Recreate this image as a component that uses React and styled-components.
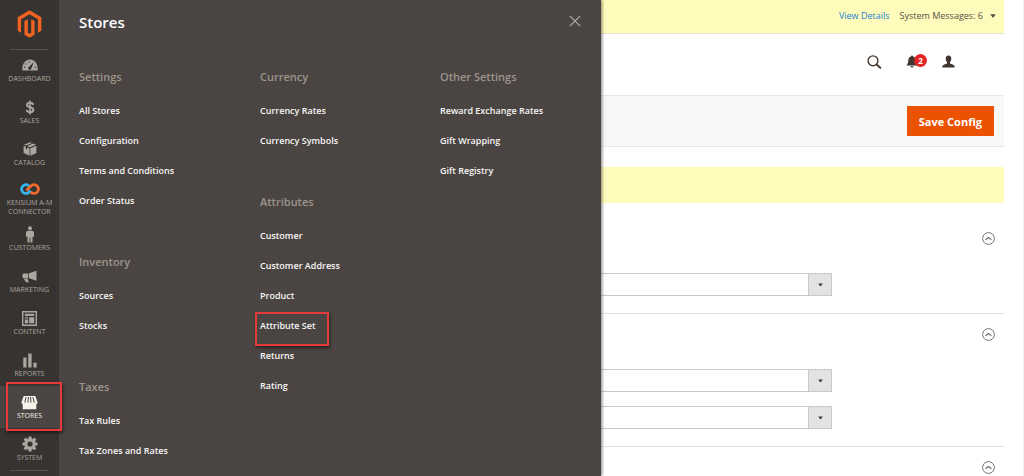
import React from "react";
import styled, { createGlobalStyle, css } from "styled-components";

const GlobalStyle = createGlobalStyle`
* { box-sizing: border-box; }
body {
  margin: 0;
  background: #ffffff;
  font-family: "Open Sans", "Noto Sans", sans-serif;
  overflow: hidden;
}
ul { list-style: none; margin: 0; padding: 0; }
h1, h2 { margin: 0; }
a { text-decoration: none; }
button { font-family: inherit; cursor: pointer; }
`;

const Page = styled.div`
display: flex;
height: 100vh;
overflow: hidden;
`;

/* ---- sidebar ---- */

const Sidebar = styled.nav`
position: relative;
z-index: 3;
flex: 0 0 59px;
background: #373330;
`;

const LogoLink = styled.a`
display: flex;
justify-content: center;
height: 49px;
padding-top: 10px;
`;

const Divider = styled.div`
height: 1px;
margin: 0 10px;
background: #55504c;
`;

const NavList = styled.ul`
margin-top: -1px;
`;

const NavItem = styled.li`
position: relative;
background: ${(p) => (p.$active ? "#4a4542" : "transparent")};
`;

const NavLink = styled.a`
display: flex;
flex-direction: column;
align-items: center;
padding: ${(p) => (p.$tall ? "5px 0 2px" : "7px 0 8px")};
color: ${(p) => (p.$active ? "#f7f3eb" : "#aaa6a0")};
font-size: 7px;
line-height: 9px;
text-align: center;
text-transform: uppercase;
`;

const IconBox = styled.span`
display: flex;
align-items: center;
justify-content: center;
height: 18px;
`;

const NavLabel = styled.span`
width: 50px;
display: flex;
justify-content: center;
white-space: ${(p) => (p.$tall ? "normal" : "nowrap")};
`;

const highlight = css`
position: absolute;
border: 2px solid #e53a3a;
box-shadow: 1px 2px 3px rgba(0, 0, 0, 0.5);
pointer-events: none;
`;

const NavHighlight = styled.span`
${highlight}
top: -4px;
left: 6px;
width: 56px;
height: 49px;
`;

/* ---- stores menu ---- */

const Menu = styled.section`
position: relative;
z-index: 2;
flex: 0 0 542px;
padding: 12px 20px 0;
background: #4a4542;
box-shadow: 1px 0 3px rgba(0, 0, 0, 0.5);
`;

const MenuHeader = styled.header`
display: flex;
justify-content: space-between;
height: 55px;
`;

const MenuTitle = styled.h1`
color: #ffffff;
font-size: 15px;
font-weight: 600;
line-height: 20px;
`;

const CloseButton = styled.button`
width: 12px;
height: 18px;
padding: 0;
border: 0;
background: none;
color: #b5afa7;
`;

const MenuColumns = styled.div`
display: grid;
grid-template-columns: 181px 180px 1fr;
`;

const MenuGroup = styled.div`
margin-bottom: 36px;
`;

const GroupTitle = styled.h2`
margin-bottom: 9px;
color: #9c948b;
font-size: 11px;
font-weight: 600;
line-height: 20px;
`;

const MenuItem = styled.li`
position: relative;
height: 30px;
`;

const MenuLink = styled.a`
color: #f7f6f5;
font-size: 9px;
font-weight: 600;
line-height: 30px;
display: block;
white-space: nowrap;
`;

const MenuHighlight = styled.span`
${highlight}
top: 1px;
left: -5px;
width: 74px;
height: 34px;
`;

/* ---- page content ---- */

const Content = styled.main`
flex: 1;
min-width: 0;
padding-right: 19px;
border-right: 1px solid #f1f1f1;
`;

const SystemBar = styled.div`
display: flex;
align-items: center;
justify-content: flex-end;
gap: 10px;
height: 34px;
padding: 0 8px 2px 0;
background: #fffbbb;
border-bottom: 1px solid #e6e3c8;
font-size: 9px;
font-weight: 500;
`;

const DetailsLink = styled.a`
color: #2185d5;
`;

const MessagesButton = styled.button`
display: flex;
align-items: center;
gap: 7px;
padding: 0;
border: 0;
background: none;
color: #57504a;
font-size: 9px;
font-weight: 500;
`;

const PageHeader = styled.header`
display: flex;
align-items: center;
justify-content: flex-end;
gap: 24px;
height: 61px;
padding: 0 49px 6px 0;
`;

const HeaderButton = styled.button`
position: relative;
display: flex;
padding: 0;
border: 0;
background: none;
color: #41362f;
`;

const Badge = styled.span`
position: absolute;
top: -1px;
left: 8px;
width: 13px;
height: 13px;
border-radius: 50%;
background: #e22626;
color: #ffffff;
font-size: 8px;
font-weight: 700;
line-height: 13px;
text-align: center;
`;

const ActionBar = styled.div`
display: flex;
align-items: center;
justify-content: flex-end;
height: 52px;
padding-right: 10px;
background: #f8f8f8;
border-top: 1px solid #e8e8e8;
border-bottom: 1px solid #e8e8e8;
`;

const SaveButton = styled.button`
height: 30px;
padding: 0 11px;
border: 1px solid #eb5202;
background: #eb5202;
color: #ffffff;
font-size: 11px;
font-weight: 700;
`;

const Notice = styled.div`
height: 36px;
margin: 20px 0 15px;
background: #fffbbb;
`;

const Section = styled.section`
padding-bottom: 17px;
border-bottom: 1px solid #e0e0e0;
`;

const SectionHeader = styled.header`
display: flex;
justify-content: flex-end;
height: 55px;
padding: 14px 9px 0 0;
`;

const ToggleButton = styled.button`
width: 13px;
height: 13px;
padding: 0;
border: 0;
background: none;
color: #77716c;
`;

const Fields = styled.div`
display: grid;
gap: 14px;
margin-right: 172px;
`;

const SelectWrap = styled.label`
position: relative;
display: block;
height: 23px;
`;

const Select = styled.select`
appearance: none;
display: block;
width: 100%;
height: 23px;
border: 1px solid #c9c9c9;
border-left: 0;
border-radius: 0 1px 1px 0;
background: #ffffff;
`;

const SelectArrow = styled.span`
position: absolute;
top: 0;
right: 0;
display: flex;
align-items: center;
justify-content: center;
width: 24px;
height: 23px;
border: 1px solid #c9c9c9;
background: #e3e3e3;
color: #41362f;
pointer-events: none;
`;

/* ---- icons ---- */

const Svg = ({ w, h, box, children }) => (
  <svg width={w} height={h} viewBox={box || `0 0 ${w} ${h}`} fill="currentColor" aria-hidden="true" style={{ display: "block" }}>
    {children}
  </svg>
);

const MagentoLogo = () => (
  <Svg w={25} h={28} box="1 0 22 24">
    <path fill="#f26322" d="M12 24l-4.455-2.572v-12l2.97-1.715v12.001l1.485.902 1.485-.902V7.713l2.971 1.715v12L12 24zM22.391 6.003v12l-2.969 1.714V7.713L12 3.43 4.574 7.713v12.004l-2.97-1.714V6.003L12 0l10.391 6.003z" />
  </Svg>
);

const DashboardIcon = () => (
  <Svg w={16} h={12}>
    <path d="M0.4 11.5C-0.3 5 3.3 0.6 8 0.6S16.3 5 15.6 11.5Z" />
    <g fill="#373330">
      <circle cx="2.6" cy="8.2" r="0.7" />
      <circle cx="3.9" cy="4.9" r="0.7" />
      <circle cx="7" cy="3" r="0.7" />
      <circle cx="13.4" cy="8.2" r="0.7" />
      <path d="M11.8 3.2L9.3 9.4A1.6 1.6 0 1 1 7 7.8Z" />
    </g>
  </Svg>
);

const SalesIcon = () => (
  <Svg w={10} h={15}>
    <path d="M5 0.5v14" stroke="currentColor" strokeWidth="1.6" />
    <path d="M8.2 4.9C7.8 3.5 6.7 2.8 5 2.8 3.2 2.8 2 3.7 2 5c0 3.1 6.3 1.5 6.3 4.8 0 1.5-1.3 2.4-3.2 2.4-2 0-3.2-.8-3.5-2.3" fill="none" stroke="currentColor" strokeWidth="2.1" />
  </Svg>
);

const CatalogIcon = () => (
  <Svg w={14} h={14}>
    <path d="M7 0.3L9 1.1 3 3.6 1 2.8ZM10.2 1.5L13 2.8 7 5.3 4.3 4.1ZM0.6 3.8L2.9 4.8V7L4.2 7.6V5.3L6.6 6.3V13.7L0.6 11ZM13.4 3.8L7.4 6.3V13.7L13.4 11Z" />
  </Svg>
);

const KensiumIcon = () => (
  <Svg w={20} h={12}>
    <g fill="none" strokeWidth="2.8">
      <path d="M9.2 3.1A4.4 4.4 0 1 0 9.2 9L10.6 7.6" stroke="#35b6f0" />
      <path d="M6.4 7.6L10.8 3.1A4.4 4.4 0 1 1 10.8 9" stroke="#f26a2e" />
    </g>
  </Svg>
);

const CustomersIcon = () => (
  <Svg w={10} h={17}>
    <circle cx="5" cy="2.2" r="2" />
    <path d="M3 4.7H7C8.4 4.7 9 5.8 9 7v3.8H7.5V16.6H5.4V11.6H4.6V16.6H2.5V10.8H1V7C1 5.8 1.6 4.7 3 4.7Z" />
  </Svg>
);

const MarketingIcon = () => (
  <Svg w={15} h={13}>
    <path d="M14.5 0.8V10.8L7 8.3V3.3ZM6.3 3.5V8.2H1.2L0.4 6.9V4.8L1.2 3.5ZM1.8 8.8H5.5L6.9 12.2H4Z" />
  </Svg>
);

const ContentIcon = () => (
  <Svg w={15} h={15}>
    <path fillRule="evenodd" d="M0 0H15V15H0ZM1.4 1.4V13.6H13.6V1.4Z" />
    <path d="M2.8 2.8H12.2V5H2.8ZM2.8 6.2H6.2V7.6H2.8ZM2.8 8.6H6.2V12.2H2.8ZM7.2 6.2H12.2V12.2H7.2Z" />
  </Svg>
);

const ReportsIcon = () => (
  <Svg w={14} h={15}>
    <path d="M0.3 4.6H3.5V14.6H0.3ZM5.3 0.4H8.6V14.6H5.3ZM10.4 9.8H13.6V14.6H10.4Z" />
  </Svg>
);

const StoresIcon = () => (
  <Svg w={17} h={15}>
    <path d="M2.7 1H14.3L16.6 7.3C16.6 8.6 15.9 9 15.3 9.1V14.2H1.7V9.1C1.1 9 0.4 8.6 0.4 7.3Z" />
    <path d="M5.1 2L3.8 7.6M7.4 2L7 7.6M9.6 2L10 7.6M11.9 2L13.2 7.6" stroke="#4a4542" strokeWidth="1" />
  </Svg>
);

const SystemIcon = () => (
  <Svg w={16} h={16}>
    <circle cx="8" cy="8" r="4.1" fill="none" stroke="currentColor" strokeWidth="3" />
    {[0, 45, 90, 135, 180, 225, 270, 315].map((angle) => (
      <path key={angle} d="M6.7 0.4H9.3L10 3.5H6Z" transform={`rotate(${angle} 8 8)`} />
    ))}
  </Svg>
);

const CloseIcon = () => (
  <Svg w={12} h={12}>
    <path d="M0.8 0.8L11.2 11.2M11.2 0.8L0.8 11.2" stroke="currentColor" strokeWidth="1.2" />
  </Svg>
);

const CaretIcon = ({ w }) => (
  <Svg w={w} h={4} box="0 0 6 4">
    <path d="M0.2 0.2H5.8L3 3.9Z" />
  </Svg>
);

const SearchIcon = () => (
  <Svg w={15} h={14}>
    <circle cx="6" cy="5.8" r="4.9" fill="none" stroke="currentColor" strokeWidth="1.4" />
    <path d="M9.4 9.2L13.9 13.4" stroke="currentColor" strokeWidth="1.9" />
  </Svg>
);

const BellIcon = () => (
  <Svg w={12} h={13}>
    <path d="M6 0.5C6.6 0.5 6.9 0.9 7 1.5 9 2 9.6 3.7 9.7 5.6 9.8 8 10.3 8.8 11.5 10.6H0.5C1.7 8.8 2.2 8 2.3 5.6 2.4 3.7 3 2 5 1.5 5.1 0.9 5.4 0.5 6 0.5ZM4.3 11.3H7.7C7.4 13 4.6 13 4.3 11.3Z" />
  </Svg>
);

const UserIcon = () => (
  <Svg w={13} h={13}>
    <path d="M6.5 0.4C8.5 0.4 9.4 1.8 9.3 3.7 9.2 5.4 8.6 6.4 8 7V8.4C9.6 9.2 12.7 9.3 12.8 12.4H0.2C0.3 9.3 3.4 9.2 5 8.4V7C4.4 6.4 3.8 5.4 3.7 3.7 3.6 1.8 4.5 0.4 6.5 0.4Z" />
  </Svg>
);

const ToggleIcon = () => (
  <Svg w={13} h={13}>
    <g fill="none" stroke="currentColor">
      <circle cx="6.5" cy="6.5" r="5.9" />
      <path d="M3.6 7.7L6.5 5.5 9.4 7.7" strokeWidth="1.3" />
    </g>
  </Svg>
);

/* ---- data ---- */

const navItems = [
  { title: "Dashboard", Icon: DashboardIcon },
  { title: "Sales", Icon: SalesIcon },
  { title: "Catalog", Icon: CatalogIcon },
  { title: "Kensium A-M Connector", Icon: KensiumIcon, tall: true },
  { title: "Customers", Icon: CustomersIcon },
  { title: "Marketing", Icon: MarketingIcon },
  { title: "Content", Icon: ContentIcon },
  { title: "Reports", Icon: ReportsIcon },
  { title: "Stores", Icon: StoresIcon, active: true },
  { title: "System", Icon: SystemIcon },
];

const menuColumns = [
  [
    { title: "Settings", links: ["All Stores", "Configuration", "Terms and Conditions", "Order Status"] },
    { title: "Inventory", links: ["Sources", "Stocks"] },
    { title: "Taxes", links: ["Tax Rules", "Tax Zones and Rates"] },
  ],
  [
    { title: "Currency", links: ["Currency Rates", "Currency Symbols"] },
    { title: "Attributes", links: ["Customer", "Customer Address", "Product", "Attribute Set", "Returns", "Rating"] },
  ],
  [{ title: "Other Settings", links: ["Reward Exchange Rates", "Gift Wrapping", "Gift Registry"] }],
];

const sections = [["Store view"], ["Default value", "Fallback value"], []];

const StoresMenu = () => (
  <Menu>
    <MenuHeader>
      <MenuTitle>Stores</MenuTitle>
      <CloseButton aria-label="Close">
        <CloseIcon />
      </CloseButton>
    </MenuHeader>
    <MenuColumns>
      {menuColumns.map((groups, index) => (
        <div key={index}>
          {groups.map((group) => (
            <MenuGroup key={group.title}>
              <GroupTitle>{group.title}</GroupTitle>
              <ul>
                {group.links.map((link) => (
                  <MenuItem key={link}>
                    <MenuLink href="#">{link}</MenuLink>
                    {link === "Attribute Set" && <MenuHighlight />}
                  </MenuItem>
                ))}
              </ul>
            </MenuGroup>
          ))}
        </div>
      ))}
    </MenuColumns>
  </Menu>
);

const App = () => {
  return (
    <>
      <GlobalStyle />
      <Page>
        <Sidebar>
          <LogoLink href="#" aria-label="Magento">
            <MagentoLogo />
          </LogoLink>
          <Divider />
          <NavList>
            {navItems.map(({ title, Icon, tall, active }) => (
              <NavItem key={title} $active={active}>
                <NavLink href="#" $tall={tall} $active={active}>
                  <IconBox>
                    <Icon />
                  </IconBox>
                  <NavLabel $tall={tall}>{title}</NavLabel>
                </NavLink>
                {active && <NavHighlight />}
              </NavItem>
            ))}
          </NavList>
          <Divider />
        </Sidebar>
        <StoresMenu />
        <Content>
          <SystemBar>
            <DetailsLink href="#">View Details</DetailsLink>
            <MessagesButton>
              System Messages: 6 <CaretIcon w={6} />
            </MessagesButton>
          </SystemBar>
          <PageHeader>
            <HeaderButton aria-label="Search">
              <SearchIcon />
            </HeaderButton>
            <HeaderButton aria-label="Notifications">
              <BellIcon />
              <Badge>2</Badge>
            </HeaderButton>
            <HeaderButton aria-label="Account">
              <UserIcon />
            </HeaderButton>
          </PageHeader>
          <ActionBar>
            <SaveButton>Save Config</SaveButton>
          </ActionBar>
          <Notice />
          {sections.map((fields, index) => (
            <Section key={index}>
              <SectionHeader>
                <ToggleButton aria-label="Toggle section">
                  <ToggleIcon />
                </ToggleButton>
              </SectionHeader>
              <Fields>
                {fields.map((field) => (
                  <SelectWrap key={field}>
                    <Select aria-label={field} />
                    <SelectArrow>
                      <CaretIcon w={5} />
                    </SelectArrow>
                  </SelectWrap>
                ))}
              </Fields>
            </Section>
          ))}
        </Content>
      </Page>
    </>
  );
};

export default App;
